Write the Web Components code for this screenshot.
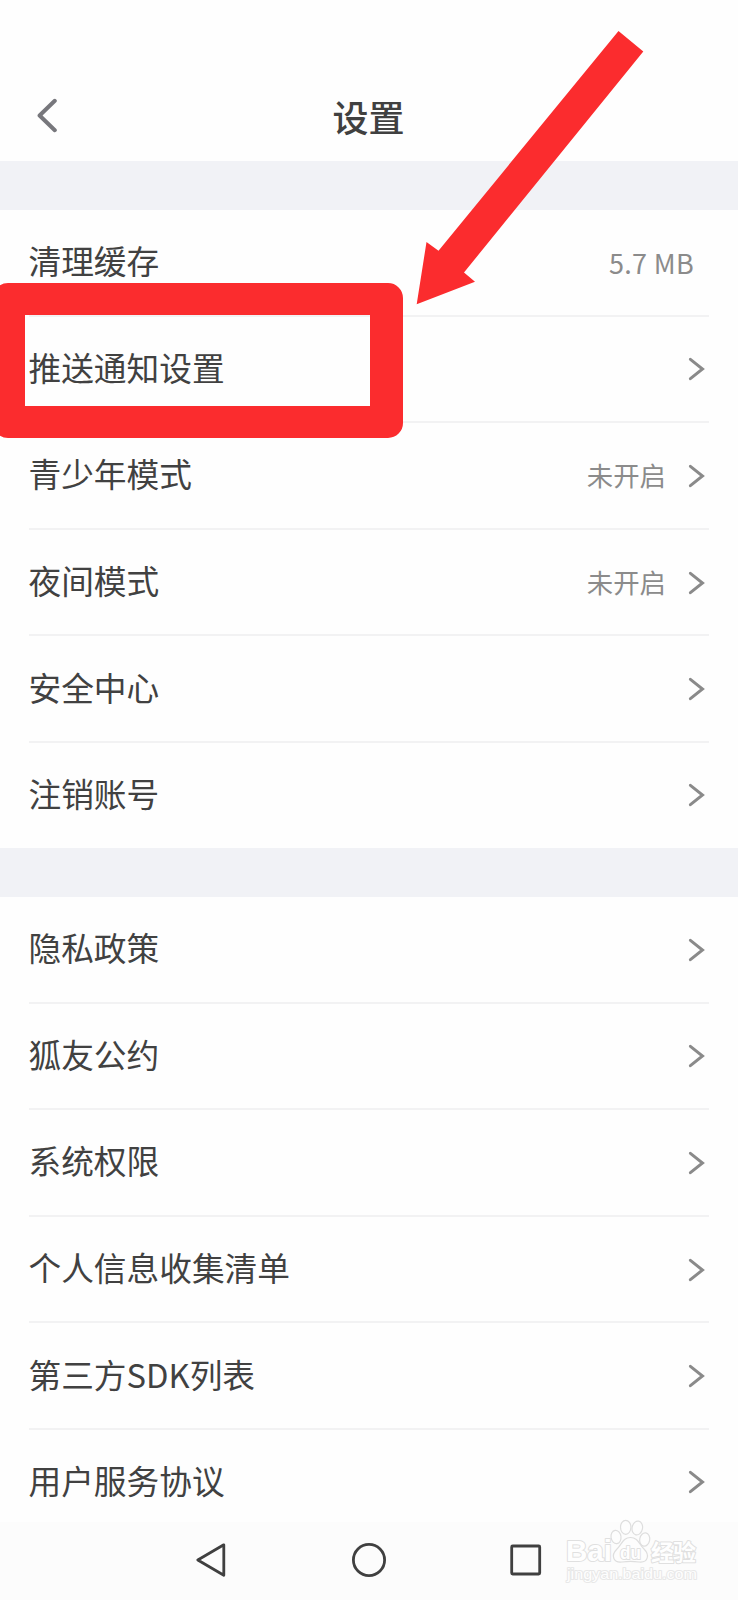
<!DOCTYPE html>
<html lang="zh-CN">
<head>
<meta charset="utf-8">
<title>设置</title>
<style>
html,body{margin:0;padding:0;background:#fefefe}
body{width:738px;height:1600px;overflow:hidden;font-family:"Noto Sans CJK SC",sans-serif;color:#414141}
</style>
</head>
<body>
<settings-page>
  <title-bar slot="header">设置</title-bar>
  <settings-group>
    <settings-row label="清理缓存" plain><size-value>5.7 MB</size-value></settings-row>
    <settings-row label="推送通知设置"></settings-row>
    <settings-row label="青少年模式">未开启</settings-row>
    <settings-row label="夜间模式">未开启</settings-row>
    <settings-row label="安全中心"></settings-row>
    <settings-row label="注销账号" last></settings-row>
  </settings-group>
  <settings-group>
    <settings-row label="隐私政策"></settings-row>
    <settings-row label="狐友公约"></settings-row>
    <settings-row label="系统权限"></settings-row>
    <settings-row label="个人信息收集清单"></settings-row>
    <settings-row label="第三方SDK列表"></settings-row>
    <settings-row label="用户服务协议" last></settings-row>
  </settings-group>
  <nav-bar slot="footer"></nav-bar>
  <red-marks slot="overlay"></red-marks>
  <brand-mark slot="overlay"></brand-mark>
</settings-page>
<script>
function define(name, html) {
  const t = document.createElement('template');
  t.innerHTML = html;
  customElements.define(name, class extends HTMLElement {
    constructor() {
      super();
      this.attachShadow({mode: 'open'}).appendChild(t.content.cloneNode(true));
    }
    connectedCallback() {
      const l = this.shadowRoot.querySelector('.label');
      if (l) l.textContent = this.getAttribute('label');
    }
  });
}

define('settings-page', `<style>
:host{display:flex;flex-direction:column;position:relative;width:738px;height:1600px;overflow:hidden}
main{flex:1;min-height:0;overflow:hidden}
</style><slot name="header"></slot><main><slot></slot></main><slot name="footer"></slot><slot name="overlay"></slot>`);

define('title-bar', `<style>
:host{display:grid;grid-template-columns:1fr auto 1fr;align-items:center;height:91px;padding:70px 37px 0 36px;flex:none}
svg{display:block}
h1{margin:0;font-size:36px;line-height:52px;font-weight:500;color:#404040}
</style><svg width="22" height="36" viewBox="0 0 22 36" fill="none" stroke="#77777c" stroke-width="4" stroke-linecap="round" stroke-linejoin="round"><path d="M18.8 2.8 3.6 17.5 18.8 32.2"/></svg><h1><slot></slot></h1>`);

define('settings-group', `<style>
:host{display:block;border-top:49px solid #f1f2f6}
</style><slot></slot>`);

define('settings-row', `<style>
:host{display:flex;align-items:center;box-sizing:border-box;height:106.6px;margin:0 29px;border-bottom:1.6px solid transparent;background:linear-gradient(#f2f2f3,#f2f2f3) 0 104.6px/100% 2px no-repeat border-box}
:host([last]){height:105px;border:0;background:none}
.label{flex:1;font-size:32.7px;line-height:48px;white-space:nowrap;padding-bottom:5px;margin-left:-.5px}
.value{font-size:26.4px;line-height:40px;color:#8b8b8b;padding-bottom:2px}
svg{display:block;margin:0 4.5px 0 20.5px}
:host([plain]) svg{display:none}
:host([plain]) .value{margin-right:15px;padding:0}
</style><span class="label"></span><span class="value"><slot></slot></span>
<svg width="18" height="24" viewBox="0 0 18 24" fill="none" stroke="#8a8a8a" stroke-width="3" stroke-linecap="round" stroke-linejoin="miter"><path d="M3.4 2.3 15.5 12 3.4 21.7"/></svg>`);

define('size-value', `<style>
:host{display:block;font-family:"Noto Sans CJK SC",sans-serif;font-size:27px;line-height:40px;letter-spacing:.3px}
</style><slot></slot>`);

define('nav-bar', `<style>
:host{display:flex;height:78px;flex:none;background:#fcfcfc;align-items:center;justify-content:center;gap:120.5px;box-sizing:border-box;padding-bottom:3px}
svg{display:block}
</style>
<svg width="36" height="36" viewBox="0 0 36 36" fill="none" stroke="#404040" stroke-width="2.8" stroke-linejoin="round"><path d="M28.8 2.8 2.8 18 28.8 33.2Z"/></svg>
<svg width="36" height="36" viewBox="0 0 36 36" fill="none" stroke="#404040" stroke-width="2.8"><circle cx="18" cy="18" r="15.6"/></svg>
<svg width="36" height="36" viewBox="0 0 36 36" fill="none" stroke="#404040" stroke-width="2.8"><rect x="3.7" y="4" width="28" height="28" rx="1"/></svg>`);

define('red-marks', `<style>
:host{position:absolute;inset:0;pointer-events:none}
.box{position:absolute;left:-7px;top:283px;width:410px;height:155px;box-sizing:border-box;border:solid #fb2c2e;border-width:32.5px 33px 32.5px 32px;border-radius:15px}
svg{position:absolute;left:0;top:0}
</style><div class="box"></div>
<svg width="738" height="320" viewBox="0 0 738 320"><path fill="#fb2c2e" d="M618.5 31 643.3 51.5 464 272.5 475 281.8 416.7 304.3 426.5 242 438.5 250.7Z"/></svg>`);

define('brand-mark', `<style>
:host{position:absolute;left:560px;top:1516px;width:144px;height:72px}
svg{display:block;overflow:visible}
text{fill:#fefefe;stroke:#e0e0e0;stroke-width:2;stroke-linejoin:round;paint-order:stroke;font-family:"Liberation Sans",sans-serif;font-weight:700}
.paw{fill:#fdfdfd;stroke:#dedede;stroke-width:1.2}
</style>
<svg width="144" height="72" viewBox="0 0 144 72">
<text x="6" y="45" font-size="30" textLength="46" lengthAdjust="spacingAndGlyphs">Bai</text>
<g class="paw">
<ellipse cx="56" cy="21" rx="5" ry="6.7" transform="rotate(-8 56 21)"/>
<ellipse cx="65.7" cy="11.3" rx="5.2" ry="7"/>
<ellipse cx="77.3" cy="12" rx="5.2" ry="7" transform="rotate(12 77.3 12)"/>
<ellipse cx="84.7" cy="23.5" rx="5" ry="6.7" transform="rotate(10 84.7 23.5)"/>
<path d="M70.5 21.5C63 21.5 62 28 57 33C50 40 54 47 62 46C68 45 73 45 79 46C88 47 90 39 84 33C79 28 78 21.5 70.5 21.5Z"/>
</g>
<text x="60" y="42.5" font-size="19" textLength="21" lengthAdjust="spacingAndGlyphs">du</text>
<text x="91" y="44.5" font-size="23" style="font-family:'Noto Sans CJK SC',sans-serif" textLength="45">经验</text>
<text x="7" y="62.5" font-size="15" style="font-weight:400;stroke:#e8e8e8" textLength="130" lengthAdjust="spacingAndGlyphs">jingyan.baidu.com</text>
</svg>`);
</script>
</body>
</html>
